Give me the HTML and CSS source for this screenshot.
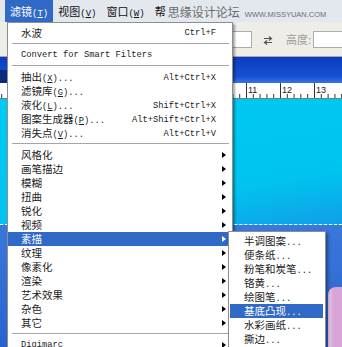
FILE: index.html
```html
<!DOCTYPE html>
<html lang="zh-CN">

<head>
    <meta charset="UTF-8">
    <meta name="viewport" content="width=device-width, initial-scale=1.0">
    <title>滤镜菜单</title>
    <link rel="stylesheet" href="styles.css">
</head>

<body>
    <div class="app">
        <div class="menubar">
            <span class="mb-item active">滤镜<span class="en">(<u>T</u>)</span></span>
            <span class="mb-item">视图<span class="en">(<u>V</u>)</span></span>
            <span class="mb-item">窗口<span class="en">(<u>W</u>)</span></span>
            <span class="mb-item">帮</span>
            <span class="watermark">思缘设计论坛<span class="wm-url">WWW.MISSYUAN.COM</span></span>
        </div>

        <div class="toolbar">
            <span class="field wide"></span>
            <svg class="swap" width="10" height="9" viewBox="0 0 10 9">
                <path d="M1 2.5H8M6 0.5L8.5 2.5L6 4.5" fill="none" stroke="#555" stroke-width="1.2"/>
                <path d="M9 6.5H2M4 4.5L1.5 6.5L4 8.5" fill="none" stroke="#555" stroke-width="1.2"/>
            </svg>
            <span class="tb-label">高度:</span>
            <span class="field"></span>
        </div>

        <div class="doc-title"><span class="doc-icon"></span></div>

        <div class="ruler">
            <svg width="342" height="15" viewBox="0 0 342 15">
                <defs>
                    <pattern id="ticks" x="8" y="0" width="34" height="15" patternUnits="userSpaceOnUse">
                        <path d="M0.5 0V15M7.3 11V15M14.1 11V15M20.9 11V15M27.7 11V15" stroke="#333" stroke-width="1"/>
                    </pattern>
                </defs>
                <rect width="342" height="15" fill="url(#ticks)"/>
                <text x="248" y="10">11</text>
                <text x="282" y="10">12</text>
                <text x="316" y="10">13</text>
            </svg>
        </div>

        <div class="canvas">
            <div class="sky"></div>
            <div class="ground">
                <div class="shape"></div>
            </div>
        </div>

        <!-- 滤镜 dropdown -->
        <div class="menu">
            <div class="item"><span class="label">水波</span><span class="key">Ctrl+F</span></div>
            <div class="sep"></div>
            <div class="item"><span class="label en">Convert for Smart Filters</span></div>
            <div class="sep"></div>
            <div class="item"><span class="label">抽出<span class="en">(<u>X</u>)...</span></span><span class="key">Alt+Ctrl+X</span></div>
            <div class="item"><span class="label">滤镜库<span class="en">(<u>G</u>)...</span></span></div>
            <div class="item"><span class="label">液化<span class="en">(<u>L</u>)...</span></span><span class="key">Shift+Ctrl+X</span></div>
            <div class="item"><span class="label">图案生成器<span class="en">(<u>P</u>)...</span></span><span class="key">Alt+Shift+Ctrl+X</span></div>
            <div class="item"><span class="label">消失点<span class="en">(<u>V</u>)...</span></span><span class="key">Alt+Ctrl+V</span></div>
            <div class="sep"></div>
            <div class="item sub"><span class="label">风格化</span></div>
            <div class="item sub"><span class="label">画笔描边</span></div>
            <div class="item sub"><span class="label">模糊</span></div>
            <div class="item sub"><span class="label">扭曲</span></div>
            <div class="item sub"><span class="label">锐化</span></div>
            <div class="item sub"><span class="label">视频</span></div>
            <div class="item sub active"><span class="label">素描</span></div>
            <div class="item sub"><span class="label">纹理</span></div>
            <div class="item sub"><span class="label">像素化</span></div>
            <div class="item sub"><span class="label">渲染</span></div>
            <div class="item sub"><span class="label">艺术效果</span></div>
            <div class="item sub"><span class="label">杂色</span></div>
            <div class="item sub"><span class="label">其它</span></div>
            <div class="sep"></div>
            <div class="item sub"><span class="label en">Digimarc</span></div>
        </div>

        <!-- 素描 submenu -->
        <div class="submenu">
            <div class="sub-item">半调图案<span class="en">...</span></div>
            <div class="sub-item">便条纸<span class="en">...</span></div>
            <div class="sub-item">粉笔和炭笔<span class="en">...</span></div>
            <div class="sub-item">铬黄<span class="en">...</span></div>
            <div class="sub-item">绘图笔<span class="en">...</span></div>
            <div class="sub-item active">基底凸现<span class="en">...</span></div>
            <div class="sub-item">水彩画纸<span class="en">...</span></div>
            <div class="sub-item">撕边<span class="en">...</span></div>
        </div>
    </div>
</body>

</html>
```

FILE: styles.css
```css
html,
body {
    margin: 0;
}

body {
    width: 342px;
    height: 347px;
    overflow: hidden;
    background-color: #ecebe6;
    font-family: "Noto Sans CJK SC", sans-serif;
}

.app {
    position: relative;
    height: 347px;
    display: flex;
    flex-direction: column;
}

.en {
    font-family: "Liberation Mono", monospace;
    font-size: 8.75px;
}

/* menu bar */
.menubar {
    height: 22px;
    flex-shrink: 0;
    display: flex;
    align-items: center;
    padding-left: 5px;
    background-color: #e3e7ee;
    font-size: 11px;
    color: #111;
    white-space: nowrap;
}

.mb-item {
    height: 22px;
    line-height: 22px;
    padding: 0 5px;
}

.mb-item .en {
    font-size: 9px;
}

.mb-item.active {
    background-color: #3169c6;
    color: #fff;
}

.watermark {
    margin-left: -3px;
    font-size: 12px;
    color: #6b6b6b;
}

.wm-url {
    margin-left: 5px;
    font-family: "Liberation Sans", sans-serif;
    font-size: 7.5px;
    color: #707070;
}

/* options bar */
.toolbar {
    height: 34px;
    flex-shrink: 0;
    display: flex;
    align-items: center;
    padding-left: 200px;
    background-color: #eeede8;
    border-bottom: 1px solid #a9a8a2;
}

.field {
    width: 40px;
    height: 17px;
    flex-shrink: 0;
    box-sizing: border-box;
    background-color: #fff;
    border: 1px solid #a6adb6;
}

.field.wide {
    width: 52px;
}

.swap {
    flex-shrink: 0;
    margin: 2px 13px 0 11px;
}

.tb-label {
    font-size: 11px;
    color: #9b9b9b;
    margin-right: 2px;
    white-space: nowrap;
}

/* document window */
.doc-title {
    height: 26px;
    flex-shrink: 0;
    display: flex;
    align-items: flex-end;
    background: linear-gradient(#0c3cc0, #1650d4 75%, #3b72e0);
}

.doc-icon {
    width: 7px;
    height: 13px;
    background-color: #0d2a78;
}

.ruler {
    height: 15px;
    flex-shrink: 0;
    background-color: #fff;
    border-bottom: 1px solid #7a7a7a;
}

.ruler svg {
    display: block;
}

.ruler text {
    font-family: "Liberation Sans", sans-serif;
    font-size: 9px;
    fill: #222;
}

.canvas {
    flex: 1;
    display: flex;
    flex-direction: column;
}

.sky {
    height: 125px;
    background: linear-gradient(170deg, #00c9f3 0%, #00c4f0 70%, #109fe6 100%);
    border-bottom: 1px dashed #fff;
}

.ground {
    flex: 1;
    display: flex;
    justify-content: flex-end;
    background: linear-gradient(#3a78dc, #2a62cc);
}

.shape {
    width: 14px;
    margin-top: 62px;
    background: linear-gradient(90deg, #eccdee, #d8a4d8 40%);
    border-top-left-radius: 8px;
}

/* dropdown */
.menu {
    position: absolute;
    left: 7px;
    top: 22px;
    width: 226px;
    box-sizing: border-box;
    padding-top: 3px;
    background-color: #fff;
    border: 1px solid #8e8e8e;
    box-shadow: 2px 2px 2px rgba(0, 0, 0, 0.35);
    font-size: 10.5px;
    color: #1c1c1c;
}

.item {
    display: grid;
    grid-template-columns: 1fr auto 16px;
    align-items: center;
    height: 14px;
    line-height: 14px;
    padding-left: 13px;
    white-space: nowrap;
}

.item .label {
    grid-column: 1;
}

.item .key {
    grid-column: 2;
    font-family: "Liberation Mono", monospace;
    font-size: 8.75px;
}

.item.sub::after {
    content: "";
    grid-column: 3;
    justify-self: start;
    margin-left: 6px;
    border-left: 4px solid #000;
    border-top: 3.5px solid transparent;
    border-bottom: 3.5px solid transparent;
}

.item.active {
    background-color: #3169c6;
    color: #fff;
}

.item.active::after {
    border-left-color: #fff;
}

.sep {
    height: 1px;
    margin: 3px 3px 4px 4px;
    background-color: #a6a6a6;
}

.submenu {
    position: absolute;
    left: 228px;
    top: 231px;
    width: 98px;
    box-sizing: border-box;
    padding: 2px 2px 3px 1px;
    background-color: #fff;
    border: 1px solid #8e8e8e;
    box-shadow: 2px 2px 3px rgba(0, 0, 0, 0.4);
    font-size: 10.5px;
    color: #1c1c1c;
}

.sub-item {
    height: 14px;
    line-height: 14px;
    padding-left: 14px;
    white-space: nowrap;
}

.sub-item.active {
    background-color: #3169c6;
    color: #fff;
}
```
